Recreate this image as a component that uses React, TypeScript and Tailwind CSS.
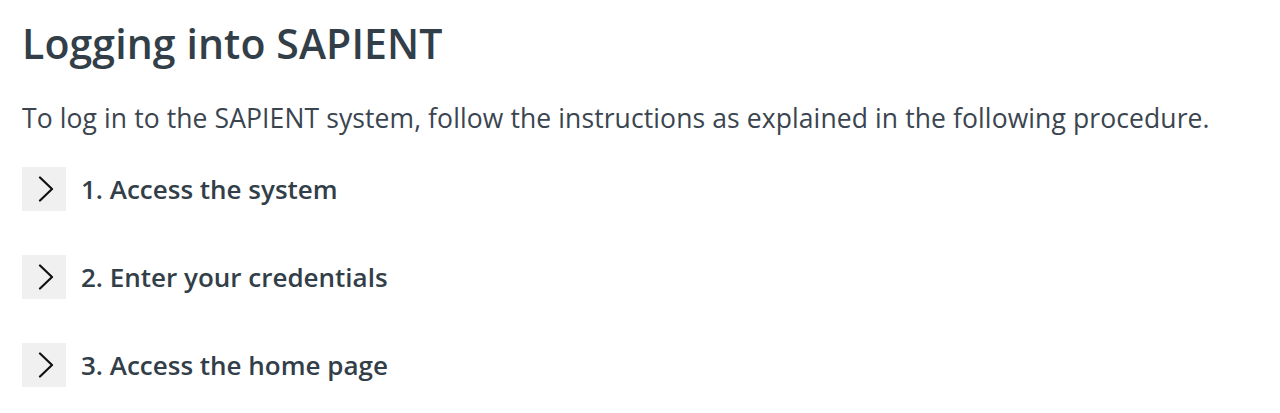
import React from "react";

const items = ["1. Access the system", "2. Enter your credentials", "3. Access the home page"];

function Chevron() {
  return (
    <svg width="16" height="26" viewBox="0 0 16 26" fill="none" className="ml-[3px]">
      <path d="M2 1.5 L14 13 L2 24.5" stroke="#111" strokeWidth="2.2" strokeLinecap="round" strokeLinejoin="round" />
    </svg>
  );
}

export default function App() {
  return (
    <div className="w-[1280px] h-[413px] bg-white pl-[22px] pt-[19px]" style={{ fontFamily: "'Open Sans', sans-serif" }}>
      <h1 className="text-[41px] leading-[48px] font-semibold text-[#323e48] tracking-[0.1px]">Logging into SAPIENT</h1>
      <p className="mt-[35px] text-[26.5px] leading-[32px] text-[#3a4550] tracking-[0.1px]">
        To log in to the SAPIENT system, follow the instructions as explained in the following procedure.
      </p>
      <div className="mt-[33px] flex flex-col gap-[44px]">
        {items.map((t) => (
          <div key={t} className="flex items-center gap-[15px]">
            <div className="w-[44px] h-[44px] bg-[#f0f0f0] flex items-center justify-center">
              <Chevron />
            </div>
            <span className="text-[26px] font-[560] text-[#323e48]">{t}</span>
          </div>
        ))}
      </div>
    </div>
  );
}
